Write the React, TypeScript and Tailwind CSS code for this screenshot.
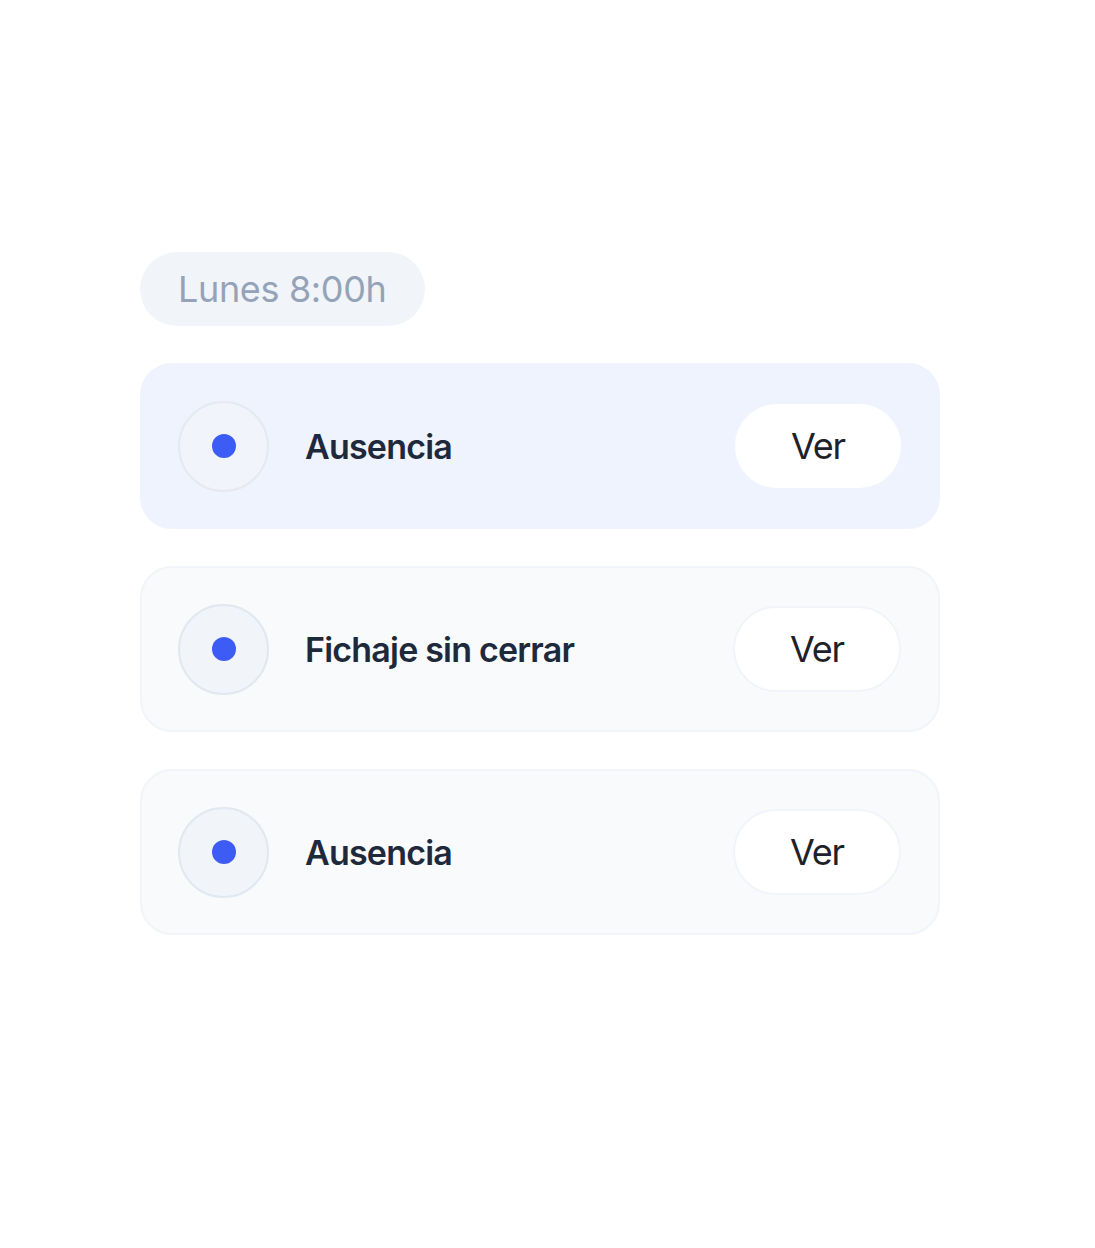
import React from "react";

const items = [
  { title: "Ausencia", active: true },
  { title: "Fichaje sin cerrar", active: false },
  { title: "Ausencia", active: false },
];

export default function App() {
  return (
    <div
      className="min-h-[1248px] w-full bg-white"
      style={{ fontFamily: "Inter, 'Noto Sans', sans-serif" }}
    >
      <div className="flex flex-col gap-[37px] pl-[140px] pt-[252px] w-[940px]">
        <div className="flex">
          <div className="h-[74px] rounded-full bg-[#f1f5f9] px-[38px] flex items-center text-[36px] text-[#94a3b8] tracking-[-0.35px]">
            Lunes 8:00h
          </div>
        </div>
        {items.map((it, i) => (
          <div
            key={i}
            className={
              it.active
                ? "h-[166px] rounded-[32px] bg-[#eff3fe] border-2 border-[#eff3fe] flex items-center pl-[36px] pr-[37px]"
                : "h-[166px] rounded-[32px] bg-[#f8fafc] border-2 border-[#f1f4f8] flex items-center pl-[36px] pr-[37px]"
            }
          >
            <div
              className={
                it.active
                  ? "w-[91px] h-[91px] rounded-full bg-[#f1f4fb] border-2 border-[#e6e9ef] flex items-center justify-center"
                  : "w-[91px] h-[91px] rounded-full bg-[#f1f5f9] border-2 border-[#e2e8f0] flex items-center justify-center"
              }
            >
              <div className="w-[24px] h-[24px] rounded-full bg-[#3d5cf5]" />
            </div>
            <div className="ml-[36px] flex-1 text-[34px] font-semibold text-[#1e293b] tracking-[-0.8px]">
              {it.title}
            </div>
            <div
              className={
                it.active
                  ? "w-[166px] h-[84px] rounded-full bg-white border-2 border-white flex items-center justify-center text-[36px] text-[#1f2129] tracking-[-1.2px]"
                  : "w-[168px] h-[86px] rounded-full bg-white border-2 border-[#f1f4f8] flex items-center justify-center text-[36px] text-[#1f2129] tracking-[-1.2px]"
              }
            >
              Ver
            </div>
          </div>
        ))}
      </div>
    </div>
  );
}
